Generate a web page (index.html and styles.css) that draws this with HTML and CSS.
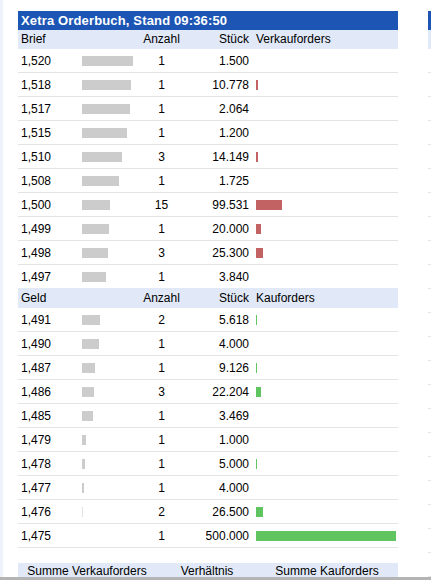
FILE: index.html
```html
<!DOCTYPE html>
<html lang="de">
<head>
<meta charset="utf-8">
<title>Xetra Orderbuch</title>
<link rel="stylesheet" href="styles.css">
</head>
<body>
<div class="viewport">
  <div class="page">
    <div class="strip"></div>
    <div class="book">
      <div class="title">Xetra Orderbuch, Stand 09:36:50</div>
      <div class="head">
        <div class="c-price">Brief</div><div></div><div class="c-count">Anzahl</div><div class="c-qty">Stück</div><div class="c-orders">Verkauforders</div>
      </div>
      <div class="row"><div class="c-price">1,520</div><div class="c-bar"><div class="bar gray" style="width:51px"></div></div><div class="c-count">1</div><div class="c-qty">1.500</div><div class="c-obar"></div></div>
      <div class="row"><div class="c-price">1,518</div><div class="c-bar"><div class="bar gray" style="width:49px"></div></div><div class="c-count">1</div><div class="c-qty">10.778</div><div class="c-obar"><div class="bar red" style="width:2px"></div></div></div>
      <div class="row"><div class="c-price">1,517</div><div class="c-bar"><div class="bar gray" style="width:48px"></div></div><div class="c-count">1</div><div class="c-qty">2.064</div><div class="c-obar"></div></div>
      <div class="row"><div class="c-price">1,515</div><div class="c-bar"><div class="bar gray" style="width:45px"></div></div><div class="c-count">1</div><div class="c-qty">1.200</div><div class="c-obar"></div></div>
      <div class="row"><div class="c-price">1,510</div><div class="c-bar"><div class="bar gray" style="width:40px"></div></div><div class="c-count">3</div><div class="c-qty">14.149</div><div class="c-obar"><div class="bar red" style="width:2px"></div></div></div>
      <div class="row"><div class="c-price">1,508</div><div class="c-bar"><div class="bar gray" style="width:37px"></div></div><div class="c-count">1</div><div class="c-qty">1.725</div><div class="c-obar"></div></div>
      <div class="row"><div class="c-price">1,500</div><div class="c-bar"><div class="bar gray" style="width:28px"></div></div><div class="c-count">15</div><div class="c-qty">99.531</div><div class="c-obar"><div class="bar red" style="width:26px"></div></div></div>
      <div class="row"><div class="c-price">1,499</div><div class="c-bar"><div class="bar gray" style="width:27px"></div></div><div class="c-count">1</div><div class="c-qty">20.000</div><div class="c-obar"><div class="bar red" style="width:5px"></div></div></div>
      <div class="row"><div class="c-price">1,498</div><div class="c-bar"><div class="bar gray" style="width:26px"></div></div><div class="c-count">3</div><div class="c-qty">25.300</div><div class="c-obar"><div class="bar red" style="width:7px"></div></div></div>
      <div class="row last"><div class="c-price">1,497</div><div class="c-bar"><div class="bar gray" style="width:24px"></div></div><div class="c-count">1</div><div class="c-qty">3.840</div><div class="c-obar"></div></div>

      <div class="head head-geld">
        <div class="c-price">Geld</div><div></div><div class="c-count">Anzahl</div><div class="c-qty">Stück</div><div class="c-orders">Kauforders</div>
      </div>
      <div class="row"><div class="c-price">1,491</div><div class="c-bar"><div class="bar gray" style="width:18px"></div></div><div class="c-count">2</div><div class="c-qty">5.618</div><div class="c-obar"><div class="bar green" style="width:1px"></div></div></div>
      <div class="row"><div class="c-price">1,490</div><div class="c-bar"><div class="bar gray" style="width:17px"></div></div><div class="c-count">1</div><div class="c-qty">4.000</div><div class="c-obar"></div></div>
      <div class="row"><div class="c-price">1,487</div><div class="c-bar"><div class="bar gray" style="width:13px"></div></div><div class="c-count">1</div><div class="c-qty">9.126</div><div class="c-obar"><div class="bar green" style="width:1px"></div></div></div>
      <div class="row"><div class="c-price">1,486</div><div class="c-bar"><div class="bar gray" style="width:12px"></div></div><div class="c-count">3</div><div class="c-qty">22.204</div><div class="c-obar"><div class="bar green" style="width:5px"></div></div></div>
      <div class="row"><div class="c-price">1,485</div><div class="c-bar"><div class="bar gray" style="width:11px"></div></div><div class="c-count">1</div><div class="c-qty">3.469</div><div class="c-obar"></div></div>
      <div class="row"><div class="c-price">1,479</div><div class="c-bar"><div class="bar gray" style="width:4px"></div></div><div class="c-count">1</div><div class="c-qty">1.000</div><div class="c-obar"></div></div>
      <div class="row"><div class="c-price">1,478</div><div class="c-bar"><div class="bar gray" style="width:3px"></div></div><div class="c-count">1</div><div class="c-qty">5.000</div><div class="c-obar"><div class="bar green" style="width:1px"></div></div></div>
      <div class="row"><div class="c-price">1,477</div><div class="c-bar"><div class="bar gray" style="width:2px"></div></div><div class="c-count">1</div><div class="c-qty">4.000</div><div class="c-obar"></div></div>
      <div class="row"><div class="c-price">1,476</div><div class="c-bar"><div class="bar faint" style="width:1px"></div></div><div class="c-count">2</div><div class="c-qty">26.500</div><div class="c-obar"><div class="bar green" style="width:7px"></div></div></div>
      <div class="row"><div class="c-price">1,475</div><div class="c-bar"></div><div class="c-count">1</div><div class="c-qty">500.000</div><div class="c-obar"><div class="bar green" style="width:140px"></div></div></div>

      <div class="summary">
        <div>Summe Verkauforders</div><div>Verhältnis</div><div>Summe Kauforders</div>
      </div>
    </div>
    <div class="side">
      <div class="side-title"></div>
      <div class="side-head"></div>
      <div class="side-row"></div><div class="side-row"></div><div class="side-row"></div><div class="side-row"></div>
      <div class="side-row"></div><div class="side-row"></div><div class="side-row"></div><div class="side-row"></div>
      <div class="side-row"></div><div class="side-row"></div><div class="side-row"></div><div class="side-row"></div>
      <div class="side-row"></div><div class="side-row"></div><div class="side-row"></div><div class="side-row"></div>
      <div class="side-row"></div><div class="side-row"></div><div class="side-row"></div><div class="side-row"></div>
      <div class="side-row"></div><div class="side-row"></div>
    </div>
  </div>
</div>
</body>
</html>
```

FILE: styles.css
```css
* { box-sizing: border-box; }
html, body { margin: 0; padding: 0; background: #fff; }
body {
  font-family: "Liberation Sans", Arial, sans-serif;
  font-size: 12px;
  color: #000;
}
.viewport {
  height: 580px;
  overflow: hidden;
  border-bottom: 3px solid #b4b4b4;
}
.page {
  display: flex;
  min-height: 577px;
}
.strip {
  width: 3px;
  flex: 0 0 3px;
  background: #eef2fa;
}
.book {
  width: 380px;
  flex: 0 0 380px;
  margin-left: 15px;
  margin-top: 11px;
}
.title {
  height: 19px;
  padding: 1px 0 0 3px;
  line-height: 18px;
  background: #1c55b4;
  color: #fff;
  font-weight: bold;
  font-size: 13px;
  letter-spacing: 0.15px;
  white-space: nowrap;
}
.head, .row {
  display: grid;
  grid-template-columns: 64px 52px 55px 61px 1fr;
}
.head {
  height: 19px;
  line-height: 19px;
  background: #e1e9f8;
}
.head-geld {
  height: 20px;
  line-height: 20px;
}
.row {
  height: 24px;
  border-bottom: 1px solid #e4e4e4;
  align-items: center;
}
.row.last { border-bottom: none; height: 23px; }
.row > div { line-height: 21px; padding-top: 2px; }
.row > .c-bar, .row > .c-obar {
  padding-top: 0;
  height: 23px;
  display: flex;
  align-items: center;
}
.c-price { padding-left: 3px; }
.c-count { text-align: center; }
.c-qty { text-align: right; padding-right: 1px; }
.c-orders { padding-left: 6px; }
.c-obar { padding-left: 6px; }
.bar { height: 10px; }
.gray { background: #cccccc; }
.faint { background: #e2e2e2; }
.red { background: #c26262; }
.green { background: #60c460; }
.summary {
  margin-top: 15px;
  height: 20px;
  padding: 0 11px 0 9px;
  background: #e1e9f8;
  display: grid;
  grid-template-columns: 1fr 1fr 1fr;
  line-height: 16px;
  text-align: center;
  white-space: nowrap;
}
.side {
  flex: 1 1 auto;
  margin-left: 30px;
  margin-top: 11px;
}
.side-title { height: 19px; background: #1c55b4; }
.side-head { height: 19px; background: #e1e9f8; }
.side-row { height: 24px; border-bottom: 1px solid #e4e4e4; }
```
